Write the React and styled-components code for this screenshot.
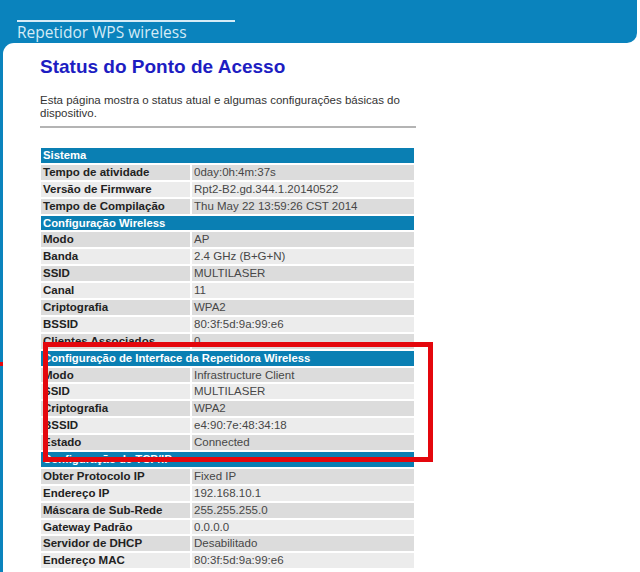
import React from 'react';
import styled, { createGlobalStyle } from 'styled-components';

const GlobalStyle = createGlobalStyle`
  html, body {
    margin: 0;
    padding: 0;
    background: #ffffff;
  }
  body {
    font-family: "Liberation Sans", Arial, sans-serif;
  }
`;

const sections = [
  {
    title: 'Sistema',
    rows: [
      ['Tempo de atividade', '0day:0h:4m:37s'],
      ['Versão de Firmware', 'Rpt2-B2.gd.344.1.20140522'],
      ['Tempo de Compilação', 'Thu May 22 13:59:26 CST 2014'],
    ],
  },
  {
    title: 'Configuração Wireless',
    rows: [
      ['Modo', 'AP'],
      ['Banda', '2.4 GHz (B+G+N)'],
      ['SSID', 'MULTILASER'],
      ['Canal', '11'],
      ['Criptografia', 'WPA2'],
      ['BSSID', '80:3f:5d:9a:99:e6'],
      ['Clientes Associados', '0'],
    ],
  },
  {
    title: 'Configuração de Interface da Repetidora Wireless',
    rows: [
      ['Modo', 'Infrastructure Client'],
      ['SSID', 'MULTILASER'],
      ['Criptografia', 'WPA2'],
      ['BSSID', 'e4:90:7e:48:34:18'],
      ['Estado', 'Connected'],
    ],
  },
  {
    title: 'Configuração de TCP/IP',
    rows: [
      ['Obter Protocolo IP', 'Fixed IP'],
      ['Endereço IP', '192.168.10.1'],
      ['Máscara de Sub-Rede', '255.255.255.0'],
      ['Gateway Padrão', '0.0.0.0'],
      ['Servidor de DHCP', 'Desabilitado'],
      ['Endereço MAC', '80:3f:5d:9a:99:e6'],
    ],
  },
];

const App = () => {
  return (
    <Page>
      <GlobalStyle />
      <Header>
        <HeaderLine />
        <HeaderTitle>Repetidor WPS wireless</HeaderTitle>
      </Header>
      <Frame>
        <Panel>
          <Title>Status do Ponto de Acesso</Title>
          <Description>
            Esta página mostra o status atual e algumas configurações básicas do dispositivo.
          </Description>
          <Divider />
          <TableWrap>
            <StatusTable>
              {sections.map((section) => (
                <React.Fragment key={section.title}>
                  <SectionHeader>{section.title}</SectionHeader>
                  {section.rows.map(([label, value], i) => (
                    <React.Fragment key={section.title + label}>
                      <LabelCell $light={i % 2 === 1}>{label}</LabelCell>
                      <ValueCell $light={i % 2 === 1}>{value}</ValueCell>
                    </React.Fragment>
                  ))}
                </React.Fragment>
              ))}
            </StatusTable>
            <Highlight />
          </TableWrap>
        </Panel>
      </Frame>
      <EdgeMark />
    </Page>
  );
};

const Page = styled.div`
  position: relative;
  width: 640px;
  min-height: 572px;
  background: #ffffff;
  overflow: hidden;
`;

const Header = styled.div`
  width: 637px;
  height: 43px;
  box-sizing: border-box;
  padding: 20px 0 0 17px;
  background: #0a83bd;
  border-bottom-right-radius: 10px;
`;

const HeaderLine = styled.div`
  width: 218px;
  height: 2px;
  background: #d6ecf7;
`;

const HeaderTitle = styled.div`
  margin-top: 1px;
  font-family: "Open Sans", "Noto Sans", sans-serif;
  font-size: 15.5px;
  line-height: 18px;
  color: #d4ebf6;
`;

const Frame = styled.div`
  background:
    linear-gradient(#0a83bd, #0a83bd) left top / 16px 16px no-repeat,
    linear-gradient(#0a83bd, #0a83bd) left top / 3px 100% no-repeat,
    #ffffff;
`;

const Panel = styled.div`
  margin-left: 3px;
  padding: 13px 0 0 37px;
  min-height: 529px;
  box-sizing: border-box;
  background: #ffffff;
  border-top-left-radius: 11px;
`;

const Title = styled.h1`
  margin: 0;
  font-family: "Liberation Sans", Arial, sans-serif;
  font-size: 19px;
  line-height: 22px;
  font-weight: bold;
  color: #1d1dc2;
`;

const Description = styled.p`
  margin: 16px 0 0 0;
  width: 376px;
  font-size: 11.5px;
  line-height: 13px;
  color: #333333;
`;

const Divider = styled.div`
  margin-top: 6px;
  width: 376px;
  height: 2px;
  background: #b4b4b4;
`;

const TableWrap = styled.div`
  position: relative;
  margin: 20px 0 0 1px;
  width: 373px;
`;

const StatusTable = styled.div`
  display: grid;
  grid-template-columns: 149px 222px;
  grid-auto-rows: 14.9px;
  gap: 2px;
`;

const SectionHeader = styled.div`
  grid-column: 1 / span 2;
  padding-left: 2px;
  background: #0a7fb3;
  color: #ffffff;
  font-size: 11.3px;
  font-weight: bold;
  line-height: 15px;
  white-space: nowrap;
  overflow: hidden;
`;

const Cell = styled.div`
  padding-left: 2px;
  font-size: 11.5px;
  line-height: 15px;
  white-space: nowrap;
  overflow: hidden;
  background: ${(p) => (p.$light ? '#ececec' : '#dcdcdc')};
`;

const LabelCell = styled(Cell)`
  font-weight: bold;
  color: #222222;
`;

const ValueCell = styled(Cell)`
  color: #474747;
`;

const Highlight = styled.div`
  position: absolute;
  left: 2px;
  top: 194px;
  width: 390px;
  height: 120px;
  box-sizing: border-box;
  border: 5px solid #e4070d;
  pointer-events: none;
`;

const EdgeMark = styled.div`
  position: absolute;
  left: 0;
  top: 362px;
  width: 3px;
  height: 4px;
  background: #e4070d;
`;

export default App;
